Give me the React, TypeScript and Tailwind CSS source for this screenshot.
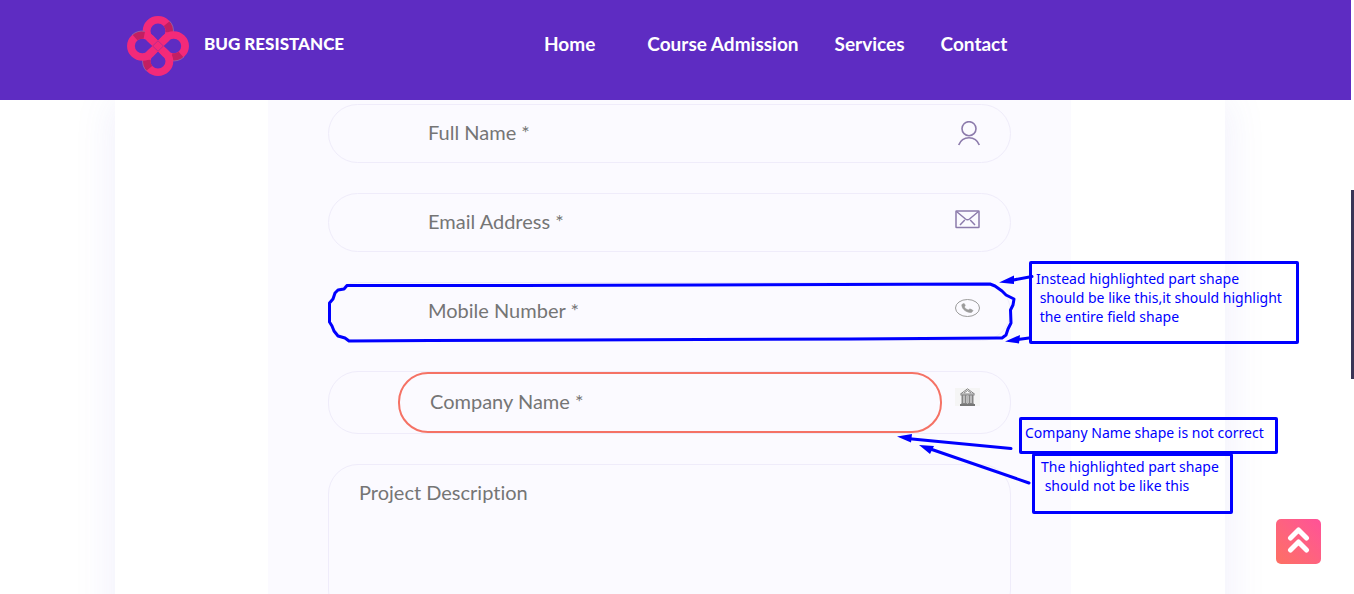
import React from "react";

function Logo() {
  return (
    <svg width="62" height="60" viewBox="0 0 62 62" preserveAspectRatio="none" fill="none" aria-hidden="true">
      {[0, 90, 180, 270].map((angle) => (
        <g key={angle} transform={`rotate(${angle} 31 31)`}>
          <path d="M31 31L23.15 23.6A11.4 11.4 0 1 1 38.85 23.6L31 31" stroke="#f32a79" strokeWidth="7.8" />
          <path d="M39.73 7.97A11.4 11.4 0 0 1 42.2 17.3" stroke="#c21f62" strokeWidth="7.6" />
          <path d="M42.3 4.9A15.4 15.4 0 0 1 46.2 18" stroke="#8f6ba8" strokeWidth="0.8" />
        </g>
      ))}
      <path d="M26 26L36 36M36 26L26 36" stroke="#f32a79" strokeWidth="7" />
      <path d="M31 25.600L36.400 31L31 36.400L25.600 31Z" stroke="#b02a90" strokeWidth="0.9" />
    </svg>
  );
}

function UserIcon() {
  return (
    <svg width="26" height="25" viewBox="0 0 26 25" fill="none" stroke="#8c7bac" strokeWidth="1.6" aria-hidden="true">
      <circle cx="14" cy="7.7" r="7" />
      <path d="M3.7 24C5.5 19.3 9.3 16.7 14 16.7S22.500 19.3 24.300 24" />
    </svg>
  );
}

function MailIcon() {
  return (
    <svg width="26" height="19" viewBox="0 0 26 19" fill="none" stroke="#8c7bac" strokeWidth="1.5" aria-hidden="true">
      <rect x="1" y="1" width="23" height="16.500" rx="0.5" />
      <path d="M1.500 1.500L10.500 9Q12.500 10.500 14.500 9L23.500 1.500M5 15L9.800 10M20 15L15.200 10" />
    </svg>
  );
}

function PhoneIcon() {
  return (
    <svg width="26" height="19" viewBox="0 0 26 19" fill="none" aria-hidden="true">
      <ellipse cx="12.500" cy="9" rx="12" ry="8.500" stroke="#9b9b9b" />
      <path
        d="M7.200 5.300L8.700 4.600Q9.400 4.500 9.700 5.200L10.200 6.600Q10.300 7.200 9.200 7.900Q10.300 10 13.200 11.100L14.400 10.200Q14.800 9.900 15.300 10.100L17.500 11Q18.200 11.400 17.700 12L16.700 13.200Q16.300 13.700 15.300 13.500C10.700 13 7.500 10.500 6.800 6.500Q6.700 5.600 7.200 5.300Z"
        fill="#9b9b9b"
        stroke="#9b9b9b"
        strokeWidth="0.6"
      />
    </svg>
  );
}

function BankIcon() {
  return (
    <svg width="26" height="19" viewBox="0 0 26 19" fill="none" aria-hidden="true">
      <rect width="25" height="18" fill="#f5f5f5" />
      <path d="M5.500 6L12.500 0.800L19.500 6ZM9 5L12.500 2.500L16 5" stroke="#858585" />
      <path d="M5.500 7H19.500M6.500 15.500H18.500" stroke="#858585" />
      <path d="M7.500 7V16M10.500 7V16M14.500 7V16M17.500 7V16" stroke="#858585" strokeWidth="2" />
      <path d="M12.500 7V16" stroke="#b5b5b5" />
      <path d="M5 17H20" stroke="#777" strokeWidth="2" />
    </svg>
  );
}

type FieldProps = {
  label: string;
  type?: string;
  icon: React.ReactNode;
  invalid?: boolean;
};

function Field({ label, type = "text", icon, invalid = false }: FieldProps) {
  return (
    <label className="flex items-start rounded-[30px] border border-[#efecfa] pl-[69px] pr-[30px]">
      <input
        type={type}
        aria-label={label}
        aria-invalid={invalid}
        placeholder={`${label} *`}
        className={
          invalid
            ? "h-[61px] min-w-0 flex-1 rounded-[30px] border-2 border-[#f57265] bg-transparent px-[30px] pb-1 text-xl text-gray-700 outline-none placeholder:text-[#757575]"
            : "h-[57px] min-w-0 flex-1 bg-transparent px-[30px] pb-1 text-xl text-gray-700 outline-none placeholder:text-[#757575]"
        }
      />
      <span className="mt-4 ml-[13px] w-[25px] shrink-0">{icon}</span>
    </label>
  );
}

function Annotations() {
  return (
    <div className="pointer-events-none absolute inset-0 font-['Noto_Sans',sans-serif] text-sm leading-[19px] whitespace-pre text-[#0000ff]">
      <svg className="absolute top-0 left-0" width="1354" height="594" viewBox="0 0 1354 594" fill="none" aria-hidden="true">
        <g stroke="#0000ff" strokeWidth="3" strokeLinejoin="round" strokeLinecap="round">
          <path d="M347 285.500L520 285.500L700 285L990 284L995 286L1002 291L1006 295L1010 297L1014 299L1013 305L1010.500 310L1011 323L1008 329L1006 335L1002 338H997L850 339L700 339.500L580 340L430 340.500L349 341L345 338L338 336L334 331L332 326L329.500 322V303L333 299L335 293L338 290L344 289L347 285.500" />
          <path d="M1032 276.500L1008 281M1029 338L1014 340M1011 448.500L907 438.500M1029 483L929 448.500" />
        </g>
        <path
          d="M999 282.500L1014 275.500V284ZM1005 341.500L1020 335L1019 343.500ZM897 436.500L912 434L911 442.500ZM919 445L934 446L930 454Z"
          fill="#0000ff"
        />
      </svg>
      <p className="absolute top-[261px] left-[1029px] h-[83px] w-[270px] rounded-xs border-3 border-[#0000ff] px-1 py-[5px]">
        {"Instead highlighted part shape\n should be like this,it should highlight\n the entire field shape"}
      </p>
      <p className="absolute top-[417px] left-[1019px] h-[37px] w-[259px] rounded-xs border-3 border-[#0000ff] px-[3px] py-[3px]">
        Company Name shape is not correct
      </p>
      <p className="absolute top-[453px] left-[1032px] h-[61px] w-[201px] rounded-xs border-3 border-[#0000ff] px-1.5 py-px">
        {"The highlighted part shape\n should not be like this"}
      </p>
    </div>
  );
}

export default function App() {
  return (
    <div className="relative flex h-screen overflow-hidden bg-white font-[Lato,sans-serif] [font-variant-ligatures:none]">
      <div className="min-w-0 flex-1">
        <header className="relative z-10 flex h-[100px] items-center bg-[#5e2cc2] pl-[127px] text-white">
          <a href="#home" className="flex w-[417px] items-center gap-[15px] pb-2 text-[17px] font-black">
            <Logo />
            <span className="pb-1">BUG RESISTANCE</span>
          </a>
          <nav className="flex items-center gap-9 pb-3 text-[19px] font-bold whitespace-nowrap">
            <a href="#home" className="mr-4">Home</a>
            <a href="#admission">Course Admission</a>
            <a href="#services">Services</a>
            <a href="#contact">Contact</a>
          </nav>
        </header>
        <main className="pr-[126px] pl-[115px]">
          <section className="flex justify-center bg-white shadow-[0_0_40px_rgba(94,84,220,0.1)]">
            <form className="mr-[154px] ml-[153px] flex flex-1 flex-col gap-[30px] bg-[#fbfaff] px-[60px] pt-1 pb-15">
              <Field label="Full Name" icon={<UserIcon />} />
              <Field label="Email Address" type="email" icon={<MailIcon />} />
              <Field label="Mobile Number" type="tel" icon={<PhoneIcon />} />
              <Field label="Company Name" icon={<BankIcon />} invalid />
              <textarea
                aria-label="Project Description"
                placeholder="Project Description"
                className="h-[156px] resize-none rounded-[30px] border border-[#efecfa] bg-transparent px-[30px] py-[11px] text-xl leading-8 text-gray-700 outline-none placeholder:text-[#757575]"
              />
            </form>
          </section>
        </main>
      </div>
      <div className="w-[3px] bg-white pt-[190px]" aria-hidden="true">
        <div className="h-[189px] bg-[#3a3556]" />
      </div>
      <button
        type="button"
        aria-label="Back to top"
        className="absolute right-[33px] bottom-[30px] flex size-[45px] items-center justify-center rounded-[5px] bg-linear-to-tr from-[#fd7062] to-[#ff5198]"
      >
        <svg width="25" height="29" viewBox="0 0 25 29" fill="none" stroke="#fff" strokeWidth="5" strokeLinejoin="round" strokeLinecap="round" aria-hidden="true">
          <path d="M4.500 11L12.500 3L20.500 11M4.500 23L12.500 15L20.500 23" />
        </svg>
      </button>
      <Annotations />
    </div>
  );
}
